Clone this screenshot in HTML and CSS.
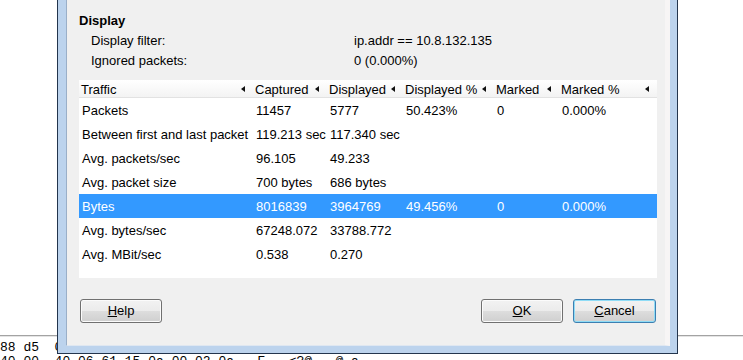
FILE: index.html
```html
<!DOCTYPE html>
<html lang="en">
<head>
    <meta charset="UTF-8">
    <meta name="viewport" content="width=device-width, initial-scale=1.0">
    <title>Capture File Properties</title>
    <link rel="stylesheet" href="styles.css">
</head>
<body>
    <div class="pane-split"></div>
    <pre class="hexdump">88 d5  0c 2c 7e 41 90 2b 34 1a 08 00 45 00
40 00  40 06 61 15 0a 00 02 0a ..E...&lt;?@...@.a</pre>

    <div class="dialog">
        <div class="dialog-body">
            <h2 class="section-title">Display</h2>
            <div class="info-grid">
                <span>Display filter:</span>
                <span>ip.addr == 10.8.132.135</span>
                <span>Ignored packets:</span>
                <span>0 (0.000%)</span>
            </div>

            <div class="stats-table">
                <div class="stats-row stats-head">
                    <div class="head-cell">Traffic</div>
                    <div class="head-cell">Captured</div>
                    <div class="head-cell">Displayed</div>
                    <div class="head-cell">Displayed %</div>
                    <div class="head-cell">Marked</div>
                    <div class="head-cell">Marked %</div>
                </div>
                <div class="stats-row">
                    <div>Packets</div><div>11457</div><div>5777</div><div>50.423%</div><div>0</div><div>0.000%</div>
                </div>
                <div class="stats-row">
                    <div>Between first and last packet</div><div>119.213 sec</div><div>117.340 sec</div><div></div><div></div><div></div>
                </div>
                <div class="stats-row">
                    <div>Avg. packets/sec</div><div>96.105</div><div>49.233</div><div></div><div></div><div></div>
                </div>
                <div class="stats-row">
                    <div>Avg. packet size</div><div>700 bytes</div><div>686 bytes</div><div></div><div></div><div></div>
                </div>
                <div class="stats-row selected">
                    <div>Bytes</div><div>8016839</div><div>3964769</div><div>49.456%</div><div>0</div><div>0.000%</div>
                </div>
                <div class="stats-row">
                    <div>Avg. bytes/sec</div><div>67248.072</div><div>33788.772</div><div></div><div></div><div></div>
                </div>
                <div class="stats-row">
                    <div>Avg. MBit/sec</div><div>0.538</div><div>0.270</div><div></div><div></div><div></div>
                </div>
            </div>

            <div class="button-bar">
                <button class="btn btn-help"><u>H</u>elp</button>
                <div class="btn-group">
                    <button class="btn"><u>O</u>K</button>
                    <button class="btn btn-default"><u>C</u>ancel</button>
                </div>
            </div>
        </div>
    </div>
</body>
</html>
```

FILE: styles.css
```css
* {
    box-sizing: border-box;
    margin: 0;
    padding: 0;
}

html,
body {
    width: 743px;
    height: 360px;
    overflow: hidden;
}

body {
    position: relative;
    background: #fff;
    color: #000;
    font-family: "Liberation Sans", Arial, sans-serif;
    font-size: 13px;
}

/* packet bytes pane behind the dialog */
.pane-split {
    margin-top: 335px;
    height: 2px;
    border-top: 1px solid #a3a3a3;
    border-bottom: 1px solid #e4e4e4;
}
.hexdump {
    margin-top: 4px;
    font-family: "Liberation Mono", monospace;
    font-size: 13px;
    line-height: 14px;
    white-space: pre;
}

/* dialog window */
.dialog {
    position: absolute;
    left: 57px;
    top: -9px;
    width: 621px;
    height: 363px;
    display: flex;
    flex-direction: column;
    padding: 9px 7px 7px 8px;
    background: #bcd3ed;
    border: 1px solid #23354d;
    border-top: 0;
}
.dialog-body {
    flex: 1;
    padding: 11px 8px 0 12px;
    background: #f0f0f0;
    border-left: 1px solid #9aafc8;
    border-right: 5px solid #f7f5f5;
    border-bottom: 1px solid #dfe7f1;
}

.section-title {
    font-size: 13px;
    font-weight: bold;
    line-height: 20px;
}
.info-grid {
    display: grid;
    grid-template-columns: 263px 1fr;
    padding-left: 12px;
    line-height: 20px;
}

/* traffic table */
.stats-table {
    margin-top: 9px;
    height: 198px;
    background: #fff;
}
.stats-row {
    display: grid;
    grid-template-columns: 174px 74px 76px 91px 65px 98px;
    height: 24px;
    padding-top: 1px;
    line-height: 24px;
    white-space: nowrap;
}
.stats-row > div {
    padding-left: 3px;
    overflow: hidden;
}
.stats-row.selected {
    background: #3399ff;
    color: #fff;
}
.stats-head {
    height: 18px;
    line-height: 17px;
    background: linear-gradient(#ffffff, #f3f3f3);
    border-bottom: 1px solid #e2e2e2;
}
.stats-row > .head-cell {
    position: relative;
    padding-left: 2px;
    overflow: visible;
}
.head-cell::after {
    content: "";
    position: absolute;
    right: 8px;
    top: 5px;
    border-top: 3.5px solid transparent;
    border-bottom: 3.5px solid transparent;
    border-right: 4px solid #111;
}

/* buttons */
.button-bar {
    display: flex;
    justify-content: space-between;
    margin-top: 21px;
}
.btn-group {
    display: flex;
    gap: 10px;
    margin-right: 1px;
}
.btn {
    width: 82px;
    height: 24px;
    line-height: 22px;
    font-family: "Liberation Sans", Arial, sans-serif;
    font-size: 13px;
    color: #000;
    text-align: center;
    border: 1px solid #707070;
    border-radius: 3px;
    background: linear-gradient(#f2f2f2 0%, #ebebeb 50%, #dddddd 51%, #cfcfcf 100%);
    box-shadow: inset 0 0 0 1px #fbfbfb;
}
.btn-help {
    margin-left: 1px;
}
.btn-default {
    width: 83px;
    border-color: #3c7fb1;
    box-shadow: inset 0 0 0 1px #8fdcf6;
}
```
